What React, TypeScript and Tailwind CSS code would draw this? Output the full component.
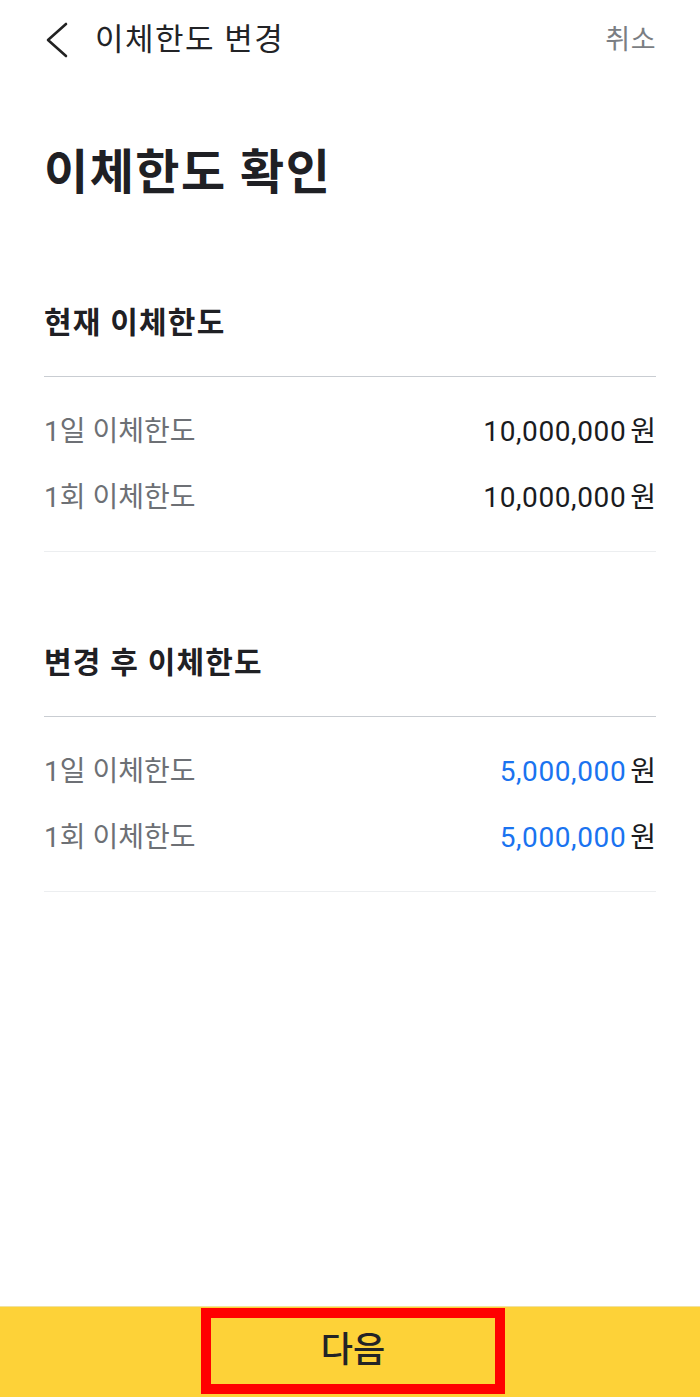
import React from 'react';

const font = { fontFamily: '"Roboto", "Noto Sans CJK KR", sans-serif' };

type Row = { label: string; amount: string };

function Section({ title, rows, blue }: { title: string; rows: Row[]; blue?: boolean }) {
  return (
    <section className="px-[44px]">
      <h2 className="h-[56px] flex items-center text-[30px] font-bold text-[#1f2024] tracking-[1.2px]">{title}</h2>
      <div className="mt-[26px] border-t border-[#c9cdd2]" />
      <div className="pt-[22px] pb-[20px] border-b border-[#eceef0]">
        {rows.map((r) => (
          <div key={r.label} className="h-[66px] flex items-center justify-between">
            <span className="text-[28px] text-[#6d7075]">{r.label}</span>
            <span className="text-[28px] flex items-baseline gap-[4px]">
              <span className={(blue ? 'text-[#1a73f0]' : 'text-[#1a1b1e]') + ' tracking-[0.6px]'}>{r.amount}</span>
              <span className="text-[#1a1b1e]">원</span>
            </span>
          </div>
        ))}
      </div>
    </section>
  );
}

export default function App() {
  return (
    <div className="h-[1397px] flex flex-col bg-white" style={font}>
      {/* header */}
      <header className="h-[80px] flex items-center px-[44px]">
        <svg width="26" height="36" viewBox="0 0 26 36" className="shrink-0">
          <path d="M22 2 L4 18 L22 34" fill="none" stroke="#222" strokeWidth="2.6" strokeLinecap="round" strokeLinejoin="round" />
        </svg>
        <h1 className="ml-[25px] text-[31px] text-[#222326] tracking-[1.5px]">이체한도 변경</h1>
        <button className="ml-auto text-[27px] text-[#7b7e83] tracking-[0.5px]">취소</button>
      </header>

      <div className="px-[44px] h-[184px] flex items-center pt-[2px]">
        <p className="text-[48px] font-bold text-[#1f2024] tracking-[1.5px]">이체한도 확인</p>
      </div>

      <div className="mt-[30px]">
        <Section
          title="현재 이체한도"
          rows={[
            { label: '1일 이체한도', amount: '10,000,000' },
            { label: '1회 이체한도', amount: '10,000,000' },
          ]}
        />
      </div>

      <div className="mt-[82px]">
        <Section
          blue
          title="변경 후 이체한도"
          rows={[
            { label: '1일 이체한도', amount: '5,000,000' },
            { label: '1회 이체한도', amount: '5,000,000' },
          ]}
        />
      </div>

      <div className="flex-1" />

      <footer className="h-[91px] bg-[#fdd238] border-t border-[#f0e2a0] flex justify-center items-start pl-[6px]">
        <button className="mt-[1px] w-[304px] h-[86px] border-[10px] border-[#ff0000] flex items-center justify-center text-[35px] font-medium text-[#222326]">
          다음
        </button>
      </footer>
    </div>
  );
}
